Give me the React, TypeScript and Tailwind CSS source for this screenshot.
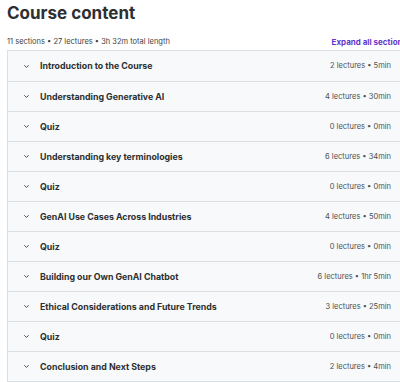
import React from "react";

const sections: [string, string][] = [
  ["Introduction to the Course", "2 lectures • 5min"],
  ["Understanding Generative AI", "4 lectures • 30min"],
  ["Quiz", "0 lectures • 0min"],
  ["Understanding key terminologies", "6 lectures • 34min"],
  ["Quiz", "0 lectures • 0min"],
  ["GenAI Use Cases Across Industries", "4 lectures • 50min"],
  ["Quiz", "0 lectures • 0min"],
  ["Building our Own GenAI Chatbot", "6 lectures • 1hr 5min"],
  ["Ethical Considerations and Future Trends", "3 lectures • 25min"],
  ["Quiz", "0 lectures • 0min"],
  ["Conclusion and Next Steps", "2 lectures • 4min"],
];

function Chevron() {
  return (
    <svg width="7" height="5" viewBox="0 0 7 5" className="shrink-0">
      <path d="M1.3 1.3 L3.5 3.4 L5.7 1.3" fill="none" stroke="#4a4d50" strokeWidth="1" />
    </svg>
  );
}

export default function App() {
  return (
    <div
      className="w-[400px] h-[382px] overflow-hidden bg-white"
      style={{ fontFamily: "Inter, 'Noto Sans', sans-serif" }}
    >
      <div className="w-[399px] pl-[7px] text-[#2d2f31]">
        <div className="pt-[3px] h-[33px] text-[17px] font-bold leading-[20px]">
          Course content
        </div>
        <div className="flex items-center justify-between h-[17px] w-[400px]">
          <span className="text-[7.5px] text-[#3e4143]">
            11 sections • 27 lectures • 3h 32m total length
          </span>
          <span className="text-[8px] font-bold text-[#6336c9] whitespace-nowrap">
            Expand all sections
          </span>
        </div>
        <div className="border border-[#dadfe3] w-[420px]">
          {sections.map(([title, stats], i) => (
            <div
              key={i}
              className={`flex items-center h-[30px] bg-[#f7f9fa] pl-[15px] pr-[35px] ${
                i > 0 ? "border-t border-[#dadfe3]" : ""
              }`}
            >
              <Chevron />
              <span className="ml-[10px] text-[8.8px] font-bold text-[#2d2f31] flex-1 whitespace-nowrap">
                {title}
              </span>
              <span className="text-[7.5px] text-[#4d5053] whitespace-nowrap">{stats}</span>
            </div>
          ))}
        </div>
      </div>
    </div>
  );
}
